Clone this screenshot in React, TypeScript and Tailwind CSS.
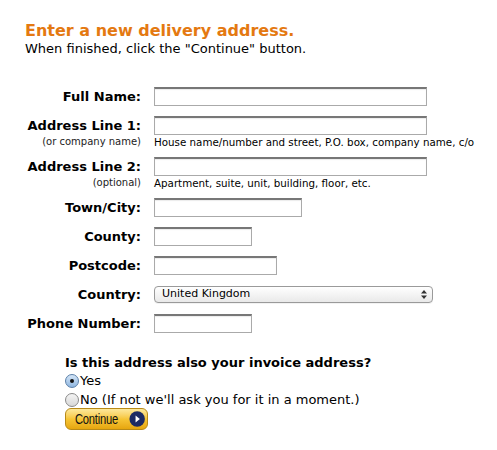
const font = { fontFamily: '"DejaVu Sans", Verdana, sans-serif' };

function Field({ width }: { width: string }) {
  return (
    <div
      className={`h-[19px] ${width} border border-[#aaa] border-t-[#777] border-t-2 bg-white shadow-[inset_0_1px_1px_rgba(0,0,0,0.08)]`}
    />
  );
}

function Row({
  label,
  hint,
  note,
  children,
}: {
  label: string;
  hint?: string;
  note?: string;
  children: React.ReactNode;
}) {
  return (
    <div className="flex flex-col">
      <div className="flex h-[19px] items-center">
        <div className="w-[116px] text-right text-[13px] font-bold leading-[16px] text-black">{label}</div>
        <div className="ml-[13px]">{children}</div>
      </div>
      {hint && (
        <div className="flex h-[12px] items-start">
          <div className="w-[116px] text-right text-[10px] leading-[13px] text-[#222]">{hint}</div>
          <div className="ml-[13px] mt-[1px] text-[10.3px] leading-[13px] text-black">{note}</div>
        </div>
      )}
    </div>
  );
}

function Radio({ checked }: { checked?: boolean }) {
  return (
    <span
      className={`inline-flex h-[14px] w-[14px] items-center justify-center rounded-full border ${
        checked
          ? 'border-[#5a7fa8] bg-gradient-to-b from-[#d5e6f7] to-[#8fb6e0]'
          : 'border-[#8a8a8a] bg-gradient-to-b from-[#f4f4f4] to-[#d8d8d8]'
      }`}
    >
      {checked && <span className="h-[4px] w-[4px] rounded-full bg-[#111]" />}
    </span>
  );
}

export default function App() {
  return (
    <div className="min-h-[450px] w-[497px] bg-white pl-[25px] pt-[21px] text-black" style={font}>
      {/* Heading */}
      <h1 className="text-[16px] font-bold leading-[20px] text-[#e47911]">Enter a new delivery address.</h1>
      <p className="text-[13px] leading-[16px]">When finished, click the "Continue" button.</p>

      {/* Form */}
      <div className="mt-[30px] flex flex-col gap-[10px]">
        <Row label="Full Name:">
          <Field width="w-[273px]" />
        </Row>
        <Row
          label="Address Line 1:"
          hint="(or company name)"
          note="House name/number and street, P.O. box, company name, c/o"
        >
          <Field width="w-[273px]" />
        </Row>
        <Row label="Address Line 2:" hint="(optional)" note="Apartment, suite, unit, building, floor, etc.">
          <Field width="w-[273px]" />
        </Row>
        <Row label="Town/City:">
          <Field width="w-[148px]" />
        </Row>
        <Row label="County:">
          <Field width="w-[98px]" />
        </Row>
        <Row label="Postcode:">
          <Field width="w-[123px]" />
        </Row>
        <Row label="Country:">
          <div className="flex h-[17px] w-[279px] items-center justify-between rounded-[4px] border border-[#9a9a9a] bg-gradient-to-b from-white to-[#e9e9e9] pl-[7px] pr-[5px] text-[11px] shadow-[0_1px_0_rgba(0,0,0,0.05)]">
            <span>United Kingdom</span>
            <svg width="6" height="9" viewBox="0 0 6 9">
              <path d="M3 0 L6 3.5 H0 Z M3 9 L6 5.5 H0 Z" fill="#333" />
            </svg>
          </div>
        </Row>
        <Row label="Phone Number:">
          <Field width="w-[98px]" />
        </Row>
      </div>

      {/* Invoice question */}
      <div className="ml-[40px] mt-[22px]">
        <p className="text-[13px] font-bold leading-[16px]">Is this address also your invoice address?</p>
        <label className="mt-[1px] flex items-center gap-[1px] text-[13px] leading-[17px]">
          <Radio checked />
          <span>Yes</span>
        </label>
        <label className="mt-[2px] flex items-center gap-[1px] text-[13px] leading-[17px]">
          <Radio />
          <span>No (If not we'll ask you for it in a moment.)</span>
        </label>
        <button className="flex h-[22px] w-[83px] items-center justify-between rounded-[6px] border border-[#b88a18] bg-gradient-to-b from-[#fde99b] via-[#f6c534] to-[#e6a60c] pl-[9px] pr-[2px]">
          <span
            className="origin-left text-[14px] leading-[16px] tracking-[-0.3px] text-[#111] [transform:scaleX(0.8)]"
            style={{ fontFamily: '"Liberation Sans", Arial, sans-serif' }}
          >
            Continue
          </span>
          <svg width="18" height="18" viewBox="0 0 18 18">
            <circle cx="9" cy="9" r="8.5" fill="#1c2a63" />
            <path d="M7.2 5.2 L12 9 L7.2 12.8 Z" fill="#fff" />
          </svg>
        </button>
      </div>
    </div>
  );
}
